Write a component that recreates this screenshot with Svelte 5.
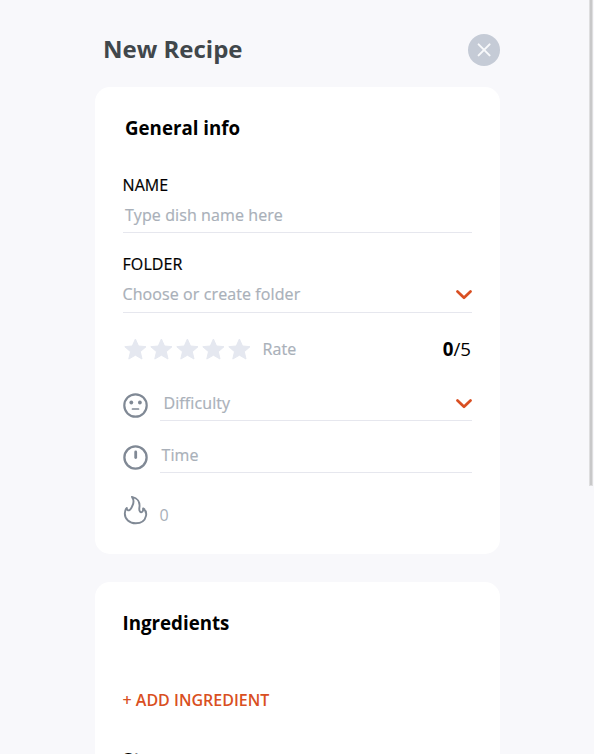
<script>
  const stars = [1, 2, 3, 4, 5];
</script>

{#snippet chevron()}
  <svg class="chevron" width="16" height="10" viewBox="0 0 16 10"><path d="M1.5 1.5 8 7.8l6.5-6.3" fill="none" stroke="#d94f22" stroke-width="2.7" stroke-linecap="round" stroke-linejoin="round" /></svg>
{/snippet}

<div class="page">
  <main>
    <header>
      <h1>New Recipe</h1>
      <button class="close" aria-label="Close">
        <svg width="32" height="32" viewBox="0 0 32 32"><path d="m10.6 10.4 11 11m0-11-11 11" stroke="#f8f9fb" stroke-width="2" stroke-linecap="round" /></svg>
      </button>
    </header>

    <section class="card general">
      <h2 class="inset">General info</h2>
      <div class="label name">NAME</div>
      <div class="field dish"><span>Type dish name here</span></div>
      <div class="label folder">FOLDER</div>
      <div class="field choose"><span>Choose or create folder</span>{@render chevron()}</div>

      <div class="rating">
        <div class="stars">
          {#each stars as star (star)}
            <svg width="26" height="24" viewBox="0 0 26 24"><path d="m12.4 2 3.1 7 7.5.7-5.7 5 1.7 7.3-6.6-3.8L5.800 22l1.700-7.300-5.700-5 7.500-.7z" fill="#e5e8f0" stroke="#e5e8f0" stroke-width="1" stroke-linejoin="round" /></svg>
          {/each}
        </div>
        <span class="rate">Rate</span>
        <span class="score"><b>0</b>/5</span>
      </div>

      <div class="row difficulty">
        <svg width="26" height="26" viewBox="0.5 0.5 26 26" fill="none" stroke="#808995" stroke-width="2.2" stroke-linecap="round">
          <circle cx="13" cy="13" r="11.2" /><path d="M10 16.5h6" stroke-width="1.7" />
          <circle cx="8.8" cy="10" r="1.9" fill="#808995" stroke="none" /><circle cx="17.4" cy="10" r="1.9" fill="#808995" stroke="none" />
        </svg>
        <div class="field"><span>Difficulty</span>{@render chevron()}</div>
      </div>
      <div class="row time">
        <svg width="26" height="26" viewBox="0.5 0.5 26 26" fill="none" stroke="#808995" stroke-width="2.3" stroke-linecap="round">
          <circle cx="13" cy="13" r="11.1" /><path d="M13.2 7.4v5.6" stroke-width="2.8" />
        </svg>
        <div class="field"><span>Time</span></div>
      </div>
      <div class="calories">
        <svg width="26" height="30" viewBox="0.3 -0.2 26 30" fill="none" stroke="#808995" stroke-width="1.9" stroke-linejoin="round" stroke-linecap="round">
          <path d="M9.3 1.7C14.8 2.7 17.5 7 16.7 12.3c-.4 2.6.2 4.6 1.6 4.8 1.4.2 2.3-1.4 2.1-3.9 2.6 1.7 3.5 4.700 2.9 7.500C22.3 25.3 18.3 28.1 13 28.1 6.7 28.1 2.1 23.8 2.1 18.3c0-2.2.7-4.3 2-5.5.1 2 1.200 2.900 2.700 2.100 1.700-.9 2-2.500 3-4.600 1.400-2.800 1.500-5.600-.5-8.600z" />
        </svg>
        <span>0</span>
      </div>
    </section>

    <section class="card ingredients">
      <h2>Ingredients</h2>
      <button class="add">+ ADD INGREDIENT</button>
      <h2 class="next">Steps</h2>
    </section>
  </main>
  <div class="scrollbar"></div>
</div>

<style>
  :global(body) { overflow: hidden; }
  .page {
    position: relative;
    box-sizing: border-box;
    height: 754px;
    padding: 34px 94px 0 94.5px;
    overflow: hidden;
    background: #f8f8fb;
    color: #000;
    font: 500 16px/22px "Open Sans", sans-serif;
  }
  header { display: flex; justify-content: space-between; height: 53px; padding-left: 8.5px; }
  h1 { margin: -2px 0 0; color: #41474b; font-size: 24px; line-height: 33px; font-weight: 700; }
  h2 { margin: 0; font-size: 18.72px; line-height: 26px; font-weight: 700; }
  button { padding: 0; border: 0; font: inherit; }
  .close { width: 32px; height: 32px; border-radius: 50%; background: #c5cbd6; }
  svg { display: block; flex: none; }
  .card { box-sizing: border-box; padding: 28px; border-radius: 15px; background: #fff; }
  .general { height: 467px; }
  .inset { padding-left: 2.5px; }
  .name { margin-top: 33px; }
  .folder { margin-top: 20px; }
  .label { height: 22px; }
  .label, .field span, .rate { letter-spacing: 0.1px; -webkit-text-stroke: 0.2px currentColor; }
  .field {
    display: flex;
    box-sizing: border-box;
    justify-content: space-between;
    border-bottom: 1px solid #e6e7ee;
    color: #a9b0b9;
  }
  .dish { height: 37px; padding: 8px 2px 0 2.4px; }
  .choose { height: 38px; padding-top: 8px; }
  .chevron { margin-top: 7px; }
  .rating { display: flex; align-items: center; height: 24px; margin-top: 24px; }
  .stars { display: flex; }
  .rate { margin-left: 10px; color: #a9b0b9; }
  .score { margin-left: auto; padding-right: 1px; font-size: 18.72px; font-weight: 400; }
  .score b { font-weight: 700; }
  .row { display: flex; justify-content: space-between; height: 32px; }
  .row .field { width: 312px; }
  .difficulty { margin-top: 28px; }
  .time { margin-top: 20px; }
  .difficulty svg:first-child, .time svg:first-child { margin-top: 4px; }
  .difficulty .field { height: 32px; padding: 3px 0 0 3.5px; }
  .row .chevron { margin-top: 7px; }
  .time .field { height: 32px; padding: 3px 2px 0 1.5px; }
  .calories { display: flex; height: 30px; margin-top: 22px; gap: 11px; color: #a9b0b9; font-weight: 400; }
  .calories span { margin-top: 9px; }
  .ingredients { height: 240px; margin-top: 28px; }
  .add { display: block; margin-top: 53px; background: none; color: #d94f22; line-height: 22px; font-weight: 600; }
  .next { margin-top: 36px; }
  .scrollbar {
    position: absolute;
    top: -4px;
    right: 1px;
    box-sizing: border-box;
    width: 4px;
    height: 490px;
    border: 1px solid #dededf;
    background: #c8c8c9;
  }
</style>
